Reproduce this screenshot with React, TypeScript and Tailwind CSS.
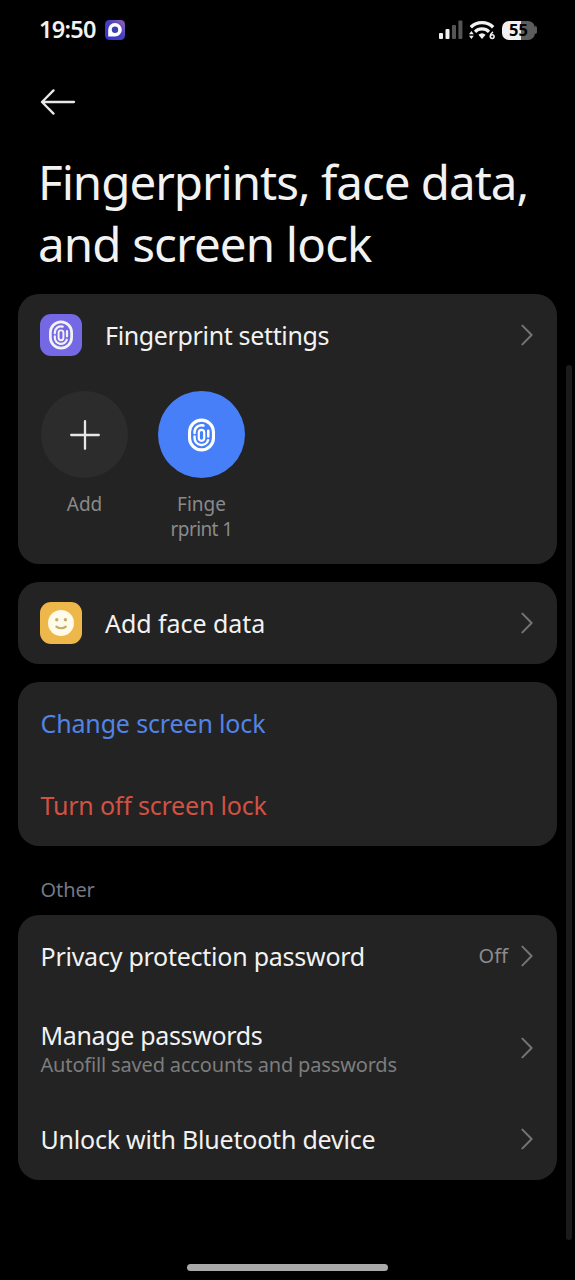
import type { ReactNode } from 'react';

const FingerprintIcon = ({ className }: { className?: string }) => (
    <svg viewBox="0 0 28 34" fill="none" stroke="currentColor" strokeLinecap="round" className={className}>
        <rect x="1.6" y="1.6" width="24.8" height="30.8" rx="12.4" strokeWidth="3.2" />
        <path d="M6.8 15v-1.2a7.2 7.2 0 0 1 9.2-6.6M21 12.5v6" strokeWidth="2.6" />
        <path d="M6.8 18.6v1.6a7.2 7.2 0 0 0 14 2.3" strokeWidth="2.6" />
        <rect x="11.2" y="11.6" width="5.6" height="11.4" rx="2.8" strokeWidth="2.3" />
    </svg>
);

const FaceIcon = () => (
    <svg viewBox="0 0 26 26" className="w-[26px] h-[26px]">
        <circle cx="13" cy="13" r="13" fill="#fffbe8" />
        <circle cx="8.8" cy="9.8" r="1.7" fill="#c4ab70" />
        <circle cx="17.4" cy="9.8" r="1.7" fill="#c4ab70" />
        <path d="M8.4 16.6c2.6 2.2 6.8 2.2 9.4 0" fill="none" stroke="#c4ab70" strokeWidth="2.2" strokeLinecap="round" />
    </svg>
);

const Chevron = () => (
    <svg viewBox="0 0 12 22" fill="none" className="w-3 h-[22px] shrink-0 text-[#747474]">
        <path d="M1.4 1.6 10.6 11l-9.2 9.4" stroke="currentColor" strokeWidth="2" strokeLinecap="round" strokeLinejoin="round" />
    </svg>
);

const StatusBar = () => (
    <div className="h-[60px] pl-[39px] pr-[38px] flex items-center justify-between">
        <div className="flex items-center gap-[9px]">
            <span className="w-[57px] text-[23.5px] leading-none font-semibold tracking-[-0.7px] whitespace-nowrap">19:50</span>
            <svg viewBox="0 0 20 20" className="w-5 h-5">
                <defs>
                    <linearGradient id="appBadge" x1="0" y1="1" x2="1" y2="0">
                        <stop offset="0" stopColor="#2c35d6" />
                        <stop offset="0.55" stopColor="#4a3fc4" />
                        <stop offset="1" stopColor="#9a63b8" />
                    </linearGradient>
                </defs>
                <rect width="20" height="20" rx="4.5" fill="url(#appBadge)" />
                <path d="M3.2 16.6V10a6.8 6.8 0 1 1 6.8 6.6z" fill="#fff" />
                <circle cx="10" cy="9.8" r="3.2" fill="#3f3fae" />
            </svg>
        </div>
        <div className="flex items-center">
            <svg viewBox="0 0 24 20" className="w-6 h-5 mr-[6px]">
                <rect x="0" y="13" width="4" height="6" rx="1" fill="#f0f0f0" />
                <rect x="6.5" y="9" width="4" height="10" rx="1" fill="#f0f0f0" />
                <rect x="13" y="5" width="4" height="14" rx="1" fill="#555" />
                <rect x="19.4" y="0.5" width="4" height="18.5" rx="1" fill="#555" />
            </svg>
            <svg viewBox="0 0 26 20" className="w-[26px] h-5 mr-[7px]" fill="none">
                <path d="M1.8 7.2a16 16 0 0 1 22.4 0" stroke="#f2f2f2" strokeWidth="3.4" />
                <path d="M6 11.8a10 10 0 0 1 14 0" stroke="#f2f2f2" strokeWidth="3.2" />
                <path d="M9.4 14.8a5.6 5.6 0 0 1 7.2 0L13 19z" fill="#f2f2f2" />
                <path d="M0 14.2 2.4 11l2.4 3.2zM0 15.8 2.4 19l2.4-3.2z" fill="#f2f2f2" />
                <path d="M24 11.8c-1.6 1.2-2.6 2.8-2.6 4.6" stroke="#f2f2f2" strokeWidth="1.5" />
                <circle cx="23.2" cy="16.6" r="1.9" stroke="#f2f2f2" strokeWidth="1.5" />
            </svg>
            {/* Battery, charge level is drawn as the light half */}
            <div className="flex items-center">
                <div className="w-[33px] h-[19px] rounded-[7px] bg-linear-to-r from-[#f0f0f0] from-[58%] to-[#5c5c5c] to-[58%] flex items-center justify-center">
                    <span className="text-[16.5px] leading-none font-bold text-black">55</span>
                </div>
                <div className="w-[2px] h-2 rounded-r-full bg-[#5c5c5c]" />
            </div>
        </div>
    </div>
);

const Card = ({ children, className = '' }: { children: ReactNode; className?: string }) => (
    <section className={`mx-[18px] rounded-[21px] bg-[#232323] ${className}`}>{children}</section>
);

interface RowProps {
    title: string;
    titleClass?: string;
    icon?: ReactNode;
    subtitle?: string;
    value?: string;
    arrow?: boolean;
    className?: string;
}

const Row = ({ title, titleClass = '', icon, subtitle, value, arrow = true, className = 'h-[82px]' }: RowProps) => (
    <div className={`pr-6 flex items-center ${icon ? 'pl-[22px]' : 'pl-[22.5px]'} ${className}`}>
        {icon}
        <div className={`flex-1 whitespace-nowrap ${subtitle ? 'pt-[2px]' : ''}`}>
            <div className={`text-[25px] leading-[32px] ${titleClass}`}>{title}</div>
            {subtitle && <div className="text-[20px] leading-[28px] tracking-[-0.16px] text-[#7d7d7d]">{subtitle}</div>}
        </div>
        {value && <span className="mr-[13px] text-[20px] leading-none text-[#8c8c8c]">{value}</span>}
        {arrow && <Chevron />}
    </div>
);

const App = () => {
    return (
        <div
            className="relative w-[575px] h-[1280px] overflow-hidden bg-black text-[#f2f2f2] flex flex-col"
            style={{ fontFamily: '"Noto Sans", "Open Sans", sans-serif' }}
        >
            <StatusBar />

            {/* Header */}
            <header className="h-[234px] pl-[38px] pt-[29px]">
                <svg viewBox="0 0 36 26" fill="none" className="w-9 h-[26px] ml-[2px]">
                    <path d="M13.5 1.4 2 13l11.5 11.6M2 13h32" stroke="#e8e8e8" strokeWidth="2.3" strokeLinecap="round" strokeLinejoin="round" />
                </svg>
                <h1 className="mt-[36px] text-[47.5px] leading-[62px] font-normal whitespace-nowrap">
                    <span className="block tracking-[-1.02px]">Fingerprints, face data,</span>
                    <span className="block tracking-[-0.84px]">and screen lock</span>
                </h1>
            </header>

            <Card className="h-[270px]">
                <Row
                    title="Fingerprint settings"
                    titleClass="tracking-[-0.35px]"
                    icon={
                        <div className="w-[42px] h-[42px] mr-[23px] rounded-[11px] bg-[#7468e4] flex items-center justify-center">
                            <FingerprintIcon className="w-6 h-[30px]" />
                        </div>
                    }
                />
                <div className="pl-[23px] pt-[15px] flex gap-[30px] text-center text-[19px] leading-[25px] text-[#8a8a8a]">
                    <div className="w-[87px]">
                        <div className="h-[87px] rounded-full bg-[#2c2c2c] flex items-center justify-center">
                            <svg viewBox="0 0 30 30" className="w-[30px] h-[30px]">
                                <path d="M15 1.2v27.6M1.2 15h27.6" stroke="#e6e6e6" strokeWidth="2.3" strokeLinecap="round" />
                            </svg>
                        </div>
                        <div className="mt-[14px]">Add</div>
                    </div>
                    <div className="w-[87px]">
                        <div className="h-[87px] rounded-full bg-[#477ff8] flex items-center justify-center text-white">
                            <FingerprintIcon className="w-[27px] h-[34px]" />
                        </div>
                        <div className="mt-[14px]">
                            <span className="block">Finge</span>
                            <span className="block tracking-[-0.6px]">rprint 1</span>
                        </div>
                    </div>
                </div>
            </Card>

            <Card className="mt-[18px]">
                <Row
                    title="Add face data"
                    titleClass="tracking-[-0.05px]"
                    icon={
                        <div className="w-[42px] h-[42px] mr-[23px] rounded-[11px] bg-[#edb849] flex items-center justify-center">
                            <FaceIcon />
                        </div>
                    }
                />
            </Card>

            <Card className="mt-[18px]">
                <Row title="Change screen lock" titleClass="text-[#5283e6] tracking-[-0.15px]" arrow={false} />
                <Row title="Turn off screen lock" titleClass="text-[#d25142] tracking-[-0.2px]" arrow={false} />
            </Card>

            <div className="mt-[30px] mb-[11px] pl-[40.5px] text-[20px] leading-7 tracking-[-0.1px] text-[#747986]">Other</div>

            <Card>
                <Row title="Privacy protection password" titleClass="tracking-[-0.25px]" value="Off" />
                <Row
                    title="Manage passwords"
                    titleClass="tracking-[-0.35px]"
                    subtitle="Autofill saved accounts and passwords"
                    className="h-[101px]"
                />
                <Row title="Unlock with Bluetooth device" titleClass="tracking-[-0.22px]" />
            </Card>

            {/* Scrollbar and gesture bar float above the page */}
            <div className="absolute left-[566px] top-[365px] w-[6px] h-[875px] rounded-full bg-[#1b1b1b]" />
            <div className="absolute left-[187px] top-[1264px] w-[201px] h-[7px] rounded-full bg-[#aaa]" />
        </div>
    );
};

export default App;
